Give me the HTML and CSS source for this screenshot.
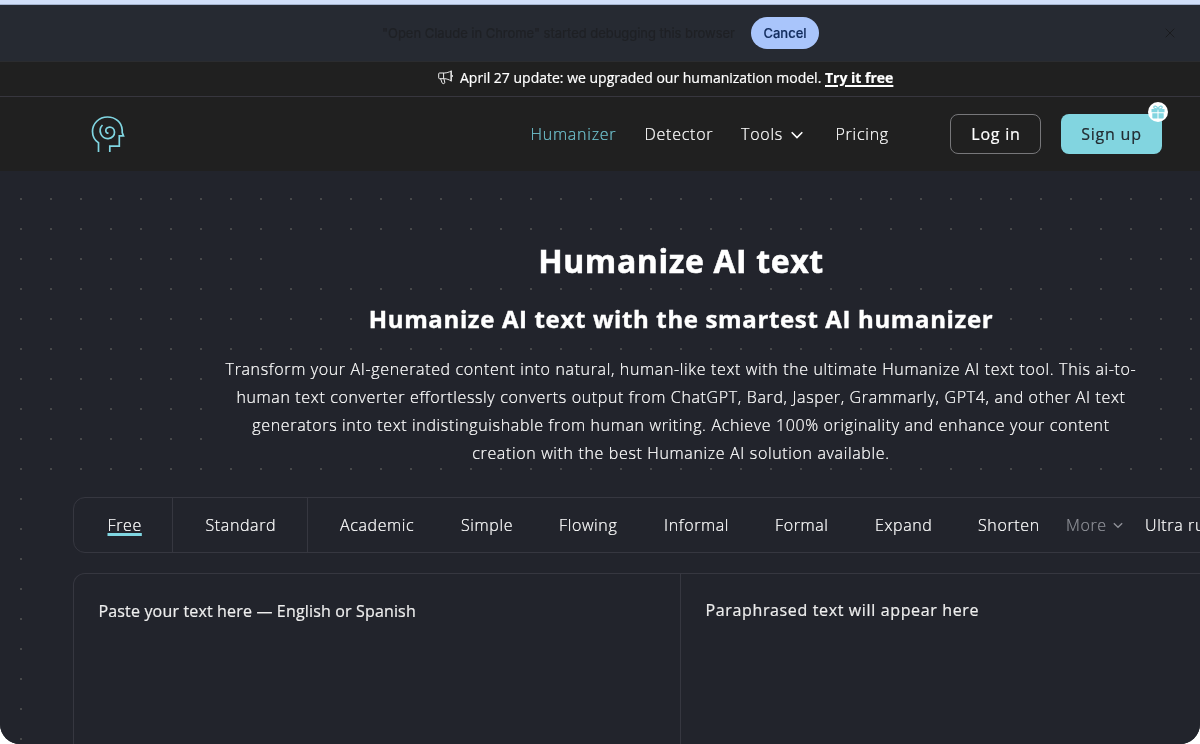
FILE: index.html
```html
<!DOCTYPE html>
<html lang="en">
<head>
<meta charset="utf-8">
<title>Humanize AI text</title>
<link rel="stylesheet" href="styles.css">
</head>
<body>
<div class="window">
  <div class="tabstrip"></div>
  <div class="infobar">
    <span class="infobar-text">"Open Claude in Chrome" started debugging this browser</span>
    <button class="cancel">Cancel</button>
    <svg class="close" viewBox="0 0 10 10"><path d="M.7.7l8.6 8.6M9.3.7L.7 9.3"/></svg>
  </div>
  <div class="announce">
    <svg class="horn" viewBox="0 0 15 15"><path d="M1.500 3h4.700C9 3 11 2 13 1.200v9.600C11 9.800 9 8.700 6.200 8.700H1.500a.8.8 0 0 1-.8-.8V3.800a.8.8 0 0 1 .8-.8zM5.600 3v5.700M2.600 8.700l1.500 4.200c.7 1.300 2.800.8 2.700-.6L5.900 8.700M13.300.5v11M14.300 5v2"/></svg>
    <span class="announce-text">April 27 update: we upgraded our humanization model.</span>
    <a class="try">Try it free</a>
  </div>
  <header class="header">
    <svg class="logo" viewBox="0 0 34 38"><path d="M7.500 37v-9.200C3.700 25.300 1.500 21.500 1.500 16.500 1.500 8.500 8 2 16.500 2c8 0 14.300 5.500 14.700 13v2.500l1.300 3.400h-4.200V31.200h-9.500V37"/><path d="M11.500 10c-2.300 2.300-2.800 6.200-1.600 9 1.300 3.100 4.200 4.800 7.400 4.600 4-.3 6.400-3.300 6.200-6.600-.2-3-2.300-5-4.900-4.900-2.300.1-3.900 1.700-3.800 3.600.1 1.600 1.200 2.600 2.700 2.500"/></svg>
    <nav class="nav">
      <a class="link active">Humanizer</a>
      <a class="link detector">Detector</a>
      <a class="link tools">Tools<svg class="chev" viewBox="0 0 12 8"><path d="M.7 1.200l5.300 5.300 5.300-5.300"/></svg></a>
      <a class="link pricing">Pricing</a>
    </nav>
    <a class="btn login">Log in</a>
    <a class="btn signup">Sign up
      <span class="gift"><svg viewBox="0 0 14 14"><path class="fill" d="M.5 4h6v3.200h-6zM7.500 4h6v3.200h-6zM1.300 8.200h5.200V13.500H2.300a1 1 0 0 1-1-1zM7.500 8.200h5.200v4.300a1 1 0 0 1-1 1H7.500z"/><path class="bow" d="M7 4C5.500 4 2.800 3.800 2.800 2.200 2.800.6 5.800.4 7 4c1.200-3.600 4.200-3.400 4.200-1.800C11.200 3.800 8.500 4 7 4z"/></svg></span>
    </a>
  </header>
  <main class="main">
    <h1 class="title">Humanize AI text</h1>
    <h2 class="subtitle">Humanize AI text with the smartest AI humanizer</h2>
    <p class="intro">Transform your AI-generated content into natural, human-like text with the ultimate Humanize AI text tool. This ai-to-<br>human text converter effortlessly converts output from ChatGPT, Bard, Jasper, Grammarly, GPT4, and other AI text<br>generators into text indistinguishable from human writing. Achieve 100% originality and enhance your content<br>creation with the best Humanize AI solution available.</p>
    <section class="tool">
      <div class="modes">
        <div class="mode free"><span>Free</span></div>
        <div class="mode standard">Standard</div>
        <div class="list">
          <span class="academic">Academic</span><span class="simple">Simple</span><span class="flowing">Flowing</span><span class="informal">Informal</span><span class="formal">Formal</span><span class="expand">Expand</span><span class="shorten">Shorten</span><span class="more">More<svg class="chev" viewBox="0 0 12 8"><path d="M1 1.200l5 5 5-5"/></svg></span><span class="ultra">Ultra run</span>
        </div>
      </div>
      <div class="editor">
        <div class="pane input">Paste your text here — English or Spanish</div>
        <div class="pane output">Paraphrased text will appear here</div>
      </div>
    </section>
  </main>
</div>
</body>
</html>
```
FILE: styles.css
```css
* { box-sizing: border-box; }
body { margin: 0; background: #fff; font-family: "Open Sans", sans-serif; overflow: hidden; }
.window { width: 1200px; height: 744px; overflow: hidden; border-radius: 0 0 20px 20px; background: #22242c; display: flex; flex-direction: column; will-change: transform; -webkit-text-stroke: .2px currentColor; }
.tabstrip { flex: none; height: 5px; background: #d1dff9; border-bottom: 1px solid #a4b3cf; }
.infobar { flex: none; height: 57px; background: #262a32; border-bottom: 1px solid #2b2c2f; display: flex; align-items: center; padding: 0 25px 0 382px; font-family: Inter, sans-serif; }
.infobar-text { width: 369px; font-size: 13px; letter-spacing: -.03px; color: #1f2125; white-space: nowrap; }
.cancel { width: 68px; height: 32px; border: 0; border-radius: 16px; background: #a9c5fb; color: #112c5d; font: 500 13px Inter, sans-serif; padding: 0; }
.close { width: 10px; height: 10px; margin-left: auto; fill: none; stroke: #1b1c1f; stroke-width: 1; }
.announce { flex: none; height: 35px; background: #202020; border-bottom: 1px solid #37363e; display: flex; align-items: center; padding: 0 0 3px 438px; color: #fff; font-size: 14px; white-space: nowrap; }
.horn { width: 15px; height: 15px; fill: none; stroke: #eee; stroke-width: 1; margin-right: 7px; }
.announce-text { width: 365px; }
.try { font-weight: 700; text-decoration: underline; text-decoration-thickness: 2px; text-underline-offset: 2px; }
.header { flex: none; height: 74px; background: #202020; display: flex; align-items: center; padding: 0 38px 0 91px; color: #fff; font-size: 16px; }
.logo { width: 34px; height: 38px; fill: none; stroke: #80d6e2; stroke-width: 1.7; }
.nav { display: flex; margin-left: auto; width: 419.5px; letter-spacing: .75px; font-weight: 300; }
.link { white-space: nowrap; }
.active { color: #6fc2ce; width: 114px; }
.detector { width: 96.5px; }
.tools { width: 94.5px; }
.chev { width: 12px; height: 8px; margin-left: 8px; fill: none; stroke: currentColor; stroke-width: 1.6; position: relative; top: -1px; }
.btn { height: 40px; border-radius: 8px; display: flex; align-items: center; justify-content: center; letter-spacing: .8px; }
.login { width: 91px; border: 1px solid #77777a; margin-right: 20px; padding-left: 1px; }
.signup { width: 101px; background: #82d5e0; color: #222a30; position: relative; }
.gift { position: absolute; right: -6px; top: -12px; width: 20px; height: 20px; border-radius: 50%; background: #fff; display: flex; align-items: center; justify-content: center; }
.gift svg { width: 14px; height: 14px; }
.fill { fill: #82d5e0; }
.bow { fill: none; stroke: #82d5e0; stroke-width: 1.2; }
.main { flex: 1; min-height: 0; background: conic-gradient(from 90deg at 28px 28px, #474849 25%, transparent 0) -8px -1px / 30px 30px, #22242c; color: #fff; display: flex; flex-direction: column; }
.title { align-self: center; width: 838px; margin: 65px 0 0 162px; height: 50px; line-height: 50px; background: #22242c; text-align: center; font-size: 32px; font-weight: 700; letter-spacing: .6px; -webkit-text-stroke-width: .5px; }
.subtitle { align-self: center; width: 640px; margin: 15px 0 0 162px; height: 36px; line-height: 36px; background: #22242c; text-align: center; font-size: 24px; font-weight: 700; letter-spacing: .64px; white-space: nowrap; -webkit-text-stroke-width: .4px; }
.intro { align-self: center; width: 920px; margin: 18px 0 0 162px; height: 112px; line-height: 28px; background: #22242c; text-align: center; font-size: 16px; font-weight: 300; letter-spacing: .645px; white-space: nowrap; }
.tool { flex: 1; min-height: 0; margin: 30px 0 0 41px; padding-left: 32px; background: #22242c; display: flex; flex-direction: column; gap: 20px; }
.modes { flex: none; width: 1216px; height: 56px; border: 1px solid #363740; border-radius: 12px; display: flex; line-height: 54px; font-size: 16px; font-weight: 300; letter-spacing: .62px; white-space: nowrap; }
.mode { border-right: 1px solid #363740; }
.free { width: 99px; padding-left: 33.5px; }
.free span { text-decoration: underline; text-decoration-color: #80d6e2; text-decoration-thickness: 3px; text-underline-offset: 2px; text-decoration-skip-ink: none; }
.standard { width: 135px; padding-left: 32.5px; }
.list { display: flex; padding-left: 32px; }
.academic { width: 121px; }
.simple { width: 98px; }
.flowing { width: 105px; }
.informal { width: 111px; }
.formal { width: 100px; }
.expand { width: 103px; }
.shorten { width: 88px; }
.more { width: 79px; color: #8f9198; }
.more .chev { width: 10px; height: 7px; margin-left: 6px; top: -2px; }
.editor { flex: 1; width: 1216px; border: 1px solid #363740; border-bottom: 0; border-radius: 12px 12px 0 0; display: flex; font-size: 16px; }
.pane { padding: 25px 24.5px; line-height: 24px; white-space: nowrap; color: #eee; }
.input { width: 607px; border-right: 1px solid #363740; letter-spacing: .16px; }
.output { letter-spacing: .64px; padding-top: 24px; }
```
